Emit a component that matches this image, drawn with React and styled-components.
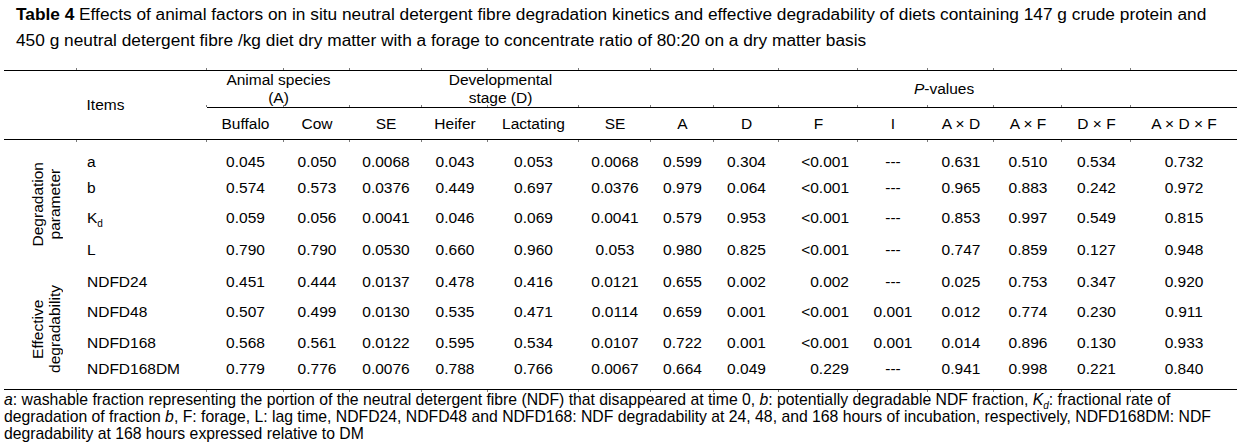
import React from "react";
import styled, { createGlobalStyle } from "styled-components";

const GlobalStyle = createGlobalStyle`
  body {
    margin: 0;
    background: #fff;
    color: #000;
    font-family: "Liberation Sans", Arial, sans-serif;
  }
  sub {
    font-size: 10px;
    line-height: 0;
    vertical-align: -4px;
  }
`;

const tickColor = "#7a7a7a";

const Page = styled.div`
  width: 1260px;
  height: 448px;
  overflow: hidden;
  padding-left: 4px;
  box-sizing: border-box;
`;

const Caption = styled.p`
  margin: 0;
  padding: 1px 0 0 12px;
  font-size: 17.3px;
  line-height: 26px;
  white-space: nowrap;
  height: 70px;
  box-sizing: border-box;
`;

const Table = styled.table`
  border-collapse: collapse;
  table-layout: fixed;
  width: 1233px;
  font-size: 15.5px;
  line-height: 18px;
`;

const HeadRow = styled.tr`
  height: ${(p) => p.$h}px;
`;

const Th = styled.th`
  position: relative;
  font-weight: normal;
  text-align: center;
  vertical-align: middle;
  padding: 0;
  border-top: ${(p) => (p.$top ? "1px solid #000" : "none")};
  border-bottom: ${(p) => (p.$bottom ? "1px solid #000" : "none")};
`;

/* small column marks on the rules, like the ones left by the original table grid */
const SubTh = styled(Th)`
  &::before,
  &::after {
    content: "";
    position: absolute;
    left: -1px;
    width: 1px;
    height: 2px;
    background: ${tickColor};
  }
  &::before {
    top: -3px;
    box-shadow: 0 -37px 0 ${tickColor};
  }
  &::after {
    bottom: -3px;
    box-shadow: 0 250px 0 ${tickColor};
  }
`;

const ItemsTh = styled(Th)`
  &::before {
    content: "";
    position: absolute;
    left: 72px;
    top: -3px;
    width: 1px;
    height: 2px;
    background: ${tickColor};
    box-shadow: 0 72px 0 ${tickColor}, 0 322px 0 ${tickColor};
  }
`;

const Row = styled.tr`
  height: ${(p) => p.$h}px;
  border-bottom: ${(p) => (p.$last ? "1px solid #000" : "none")};
`;

const Td = styled.td`
  padding: ${(p) => p.$pt}px ${(p) => (p.$right ? "9px" : "0")} 0 0;
  vertical-align: top;
  text-align: ${(p) => (p.$right ? "right" : "center")};
  white-space: nowrap;
`;

const ItemCell = styled(Td)`
  text-align: left;
  padding-left: 10px;
`;

const GroupCell = styled.td`
  padding: 0 0 0 10px;
  vertical-align: middle;
  text-align: center;
`;

const SideLabel = styled.div`
  writing-mode: vertical-rl;
  transform: rotate(180deg);
  margin: 0 auto;
  line-height: 17px;
  text-align: center;
`;

const Footnote = styled.p`
  margin: 0;
  padding-top: 1px;
  font-size: 15.75px;
  line-height: 17px;
  white-space: nowrap;
`;

const widths = [73, 130, 77, 66, 72, 66, 91, 72, 63, 65, 79, 70, 66, 68, 69, 106];

const subHeads = ["Buffalo", "Cow", "SE", "Heifer", "Lactating", "SE", "A", "D", "F", "I", "A × D", "A × F", "D × F", "A × D × F"];

const rows = [
  { item: "a", h: 35, cells: ["0.045", "0.050", "0.0068", "0.043", "0.053", "0.0068", "0.599", "0.304", "<0.001", "---", "0.631", "0.510", "0.534", "0.732"] },
  { item: "b", h: 30, cells: ["0.574", "0.573", "0.0376", "0.449", "0.697", "0.0376", "0.979", "0.064", "<0.001", "---", "0.965", "0.883", "0.242", "0.972"] },
  { item: "Kd", h: 32, cells: ["0.059", "0.056", "0.0041", "0.046", "0.069", "0.0041", "0.579", "0.953", "<0.001", "---", "0.853", "0.997", "0.549", "0.815"] },
  { item: "L", h: 32, cells: ["0.790", "0.790", "0.0530", "0.660", "0.960", "0.053", "0.980", "0.825", "<0.001", "---", "0.747", "0.859", "0.127", "0.948"] },
  { item: "NDFD24", h: 30, cells: ["0.451", "0.444", "0.0137", "0.478", "0.416", "0.0121", "0.655", "0.002", "0.002", "---", "0.025", "0.753", "0.347", "0.920"] },
  { item: "NDFD48", h: 31, cells: ["0.507", "0.499", "0.0130", "0.535", "0.471", "0.0114", "0.659", "0.001", "<0.001", "0.001", "0.012", "0.774", "0.230", "0.911"] },
  { item: "NDFD168", h: 26, cells: ["0.568", "0.561", "0.0122", "0.595", "0.534", "0.0107", "0.722", "0.001", "<0.001", "0.001", "0.014", "0.896", "0.130", "0.933"] },
  { item: "NDFD168DM", h: 34, cells: ["0.779", "0.776", "0.0076", "0.788", "0.766", "0.0067", "0.664", "0.049", "0.229", "---", "0.941", "0.998", "0.221", "0.840"] },
];

const Item = ({ name }) =>
  name === "Kd" ? (
    <>
      K<sub>d</sub>
    </>
  ) : (
    name
  );

export default function App() {
  return (
    <Page>
      <GlobalStyle />
      <Caption>
        <b>Table 4</b> Effects of animal factors on in situ neutral detergent fibre degradation kinetics and effective degradability of diets containing 147 g crude protein and
        <br />
        450 g neutral detergent fibre /kg diet dry matter with a forage to concentrate ratio of 80:20 on a dry matter basis
      </Caption>

      <Table>
        <colgroup>
          {widths.map((w, i) => (
            <col key={i} style={{ width: w }} />
          ))}
        </colgroup>
        <thead>
          <HeadRow $h={37}>
            <ItemsTh colSpan={2} rowSpan={2} $top $bottom>
              Items
            </ItemsTh>
            <Th colSpan={2} $top $bottom>
              Animal species
              <br />
              (A)
            </Th>
            <Th $top $bottom />
            <Th colSpan={2} $top $bottom>
              Developmental
              <br />
              stage (D)
            </Th>
            <Th $top $bottom />
            <Th colSpan={8} $top $bottom>
              <i>P</i>-values
            </Th>
          </HeadRow>
          <HeadRow $h={32}>
            {subHeads.map((t, i) => (
              <SubTh key={i} $bottom>
                {t}
              </SubTh>
            ))}
          </HeadRow>
        </thead>
        <tbody>
          {rows.map((r, ri) => (
            <Row key={r.item} $h={r.h} $last={ri === rows.length - 1}>
              {ri === 0 && (
                <GroupCell rowSpan={4}>
                  <SideLabel>
                    Degradation
                    <br />
                    parameter
                  </SideLabel>
                </GroupCell>
              )}
              {ri === 4 && (
                <GroupCell rowSpan={4}>
                  <SideLabel>
                    Effective
                    <br />
                    degradability
                  </SideLabel>
                </GroupCell>
              )}
              <ItemCell $pt={ri === 0 ? 13 : 4}>
                <Item name={r.item} />
              </ItemCell>
              {r.cells.map((c, ci) => (
                <Td key={ci} $pt={ri === 0 ? 13 : 4} $right={ci === 8}>
                  {c}
                </Td>
              ))}
            </Row>
          ))}
        </tbody>
      </Table>

      <Footnote>
        <i>a</i>: washable fraction representing the portion of the neutral detergent fibre (NDF) that disappeared at time 0, <i>b</i>: potentially degradable NDF fraction, <i>K<sub>d</sub></i>: fractional rate of
        <br />
        degradation of fraction <i>b</i>, F: forage, L: lag time, NDFD24, NDFD48 and NDFD168: NDF degradability at 24, 48, and 168 hours of incubation, respectively, NDFD168DM: NDF
        <br />
        degradability at 168 hours expressed relative to DM
      </Footnote>
    </Page>
  );
}
